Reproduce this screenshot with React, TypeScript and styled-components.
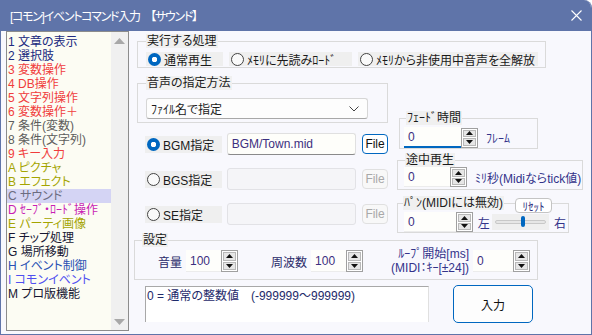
import styled, { createGlobalStyle } from 'styled-components';

const GlobalStyle = createGlobalStyle`
  html, body { margin: 0; padding: 0; background: #ffffff; }
  body {
    font-family: "Liberation Sans", "Noto Sans CJK JP", sans-serif;
    font-size: 12px;
    font-feature-settings: "palt";
    color: #1a1a1a;
  }
  * { box-sizing: border-box; }
`;

const commands: { text: string; color: string; selected?: boolean }[] = [
  { text: '1 文章の表示', color: '#202a80' },
  { text: '2 選択肢', color: '#202a80' },
  { text: '3 変数操作', color: '#f03c3c' },
  { text: '4 DB操作', color: '#f03c3c' },
  { text: '5 文字列操作', color: '#f03c3c' },
  { text: '6 変数操作＋', color: '#f03c3c' },
  { text: '7 条件(変数)', color: '#5c5c5c' },
  { text: '8 条件(文字列)', color: '#5c5c5c' },
  { text: '9 キー入力', color: '#f03c3c' },
  { text: 'A ピクチャ', color: '#a4a400' },
  { text: 'B エフェクト', color: '#a4a400' },
  { text: 'C サウンド', color: '#6c6c80', selected: true },
  { text: 'D ｾｰﾌﾞ・ﾛｰﾄﾞ操作', color: '#c81eb4' },
  { text: 'E パーティ画像', color: '#a4a400' },
  { text: 'F チップ処理', color: '#161632' },
  { text: 'G 場所移動', color: '#161632' },
  { text: 'H イベント制御', color: '#2850b4' },
  { text: 'I コモンイベント', color: '#5050f0' },
  { text: 'M プロ版機能', color: '#161632' },
];

const Triangle = ({ down }: { down?: boolean }) => (
  <svg width="7" height="4" viewBox="0 0 7 4">
    <path d={down ? 'M0 0H7L3.5 4Z' : 'M0 4H7L3.5 0Z'} fill="#111" />
  </svg>
);

const Spinner = ({ h }: { h: number }) => (
  <Spin $h={h}>
    <SpinHalf><Triangle /></SpinHalf>
    <SpinHalf><Triangle down /></SpinHalf>
  </Spin>
);

export default function App() {
  return (
    <>
      <GlobalStyle />
      <Window>
        <TitleBar>
          <Title>[コモン]イベントコマンド入力　【サウンド】</Title>
          <svg width="11" height="11" viewBox="0 0 11 11">
            <path d="M0.5 0.5L10.5 10.5M10.5 0.5L0.5 10.5" stroke="#fff" strokeWidth="1.1" />
          </svg>
        </TitleBar>
        <Body>
          <CommandList>
            <Items>
              {commands.map((c) => (
                <Item key={c.text} $color={c.color} $selected={c.selected}>{c.text}</Item>
              ))}
            </Items>
            <ScrollBar>
              <ScrollArrow>
                <svg width="11" height="6" viewBox="0 0 11 6"><path d="M0 6H11L5.5 0Z" fill="#a8a8a8" /></svg>
              </ScrollArrow>
              <ScrollArrow>
                <svg width="11" height="6" viewBox="0 0 11 6"><path d="M0 0H11L5.5 6Z" fill="#a8a8a8" /></svg>
              </ScrollArrow>
            </ScrollBar>
          </CommandList>

          <Main>
            <ExecGroup>
              <Legend>実行する処理</Legend>
              <RadioRow>
                <RadioPad $w={77}><RadioDot $checked />通常再生</RadioPad>
                <RadioPad $w={123}><RadioDot />ﾒﾓﾘに先読みﾛｰﾄﾞ</RadioPad>
                <RadioPad $w={180}><RadioDot />ﾒﾓﾘから非使用中音声を全解放</RadioPad>
              </RadioRow>
            </ExecGroup>

            <MiddleRow>
              <LeftCol>
                <SpecGroup>
                  <Legend>音声の指定方法</Legend>
                  <Select>
                    <span>ﾌｧｲﾙ名で指定</span>
                    <svg width="10" height="6" viewBox="0 0 10 6">
                      <path d="M0.5 0.5L5 5L9.5 0.5" stroke="#444" fill="none" strokeWidth="1" />
                    </svg>
                  </Select>
                </SpecGroup>
                <FileRows>
                  <FileRow>
                    <RadioPad $w={77}><RadioDot $checked />BGM指定</RadioPad>
                    <PathBox>BGM/Town.mid</PathBox>
                    <FileButton>File</FileButton>
                  </FileRow>
                  <FileRow>
                    <RadioPad $w={77}><RadioDot />BGS指定</RadioPad>
                    <PathBox $disabled />
                    <FileButton $disabled>File</FileButton>
                  </FileRow>
                  <FileRow>
                    <RadioPad $w={77}><RadioDot />SE指定</RadioPad>
                    <PathBox $disabled />
                    <FileButton $disabled>File</FileButton>
                  </FileRow>
                </FileRows>
              </LeftCol>

              <RightCol>
                <FadeGroup>
                  <Legend>ﾌｪｰﾄﾞ時間</Legend>
                  <SpinRow>
                    <NumInput $w={57} $h={21} $focused>0</NumInput>
                    <Spinner h={20} />
                    <Unit>ﾌﾚｰﾑ</Unit>
                  </SpinRow>
                </FadeGroup>
                <SeekGroup>
                  <Legend>途中再生</Legend>
                  <SpinRow>
                    <NumInput $w={46} $h={20}>0</NumInput>
                    <Spinner h={20} />
                    <Unit>ﾐﾘ秒(Midiならtick値)</Unit>
                  </SpinRow>
                </SeekGroup>
                <PanWrap>
                  <PanGroup>
                    <Legend>ﾊﾟﾝ(MIDIには無効)</Legend>
                    <SpinRow>
                      <NumInput $w={55} $h={20}>0</NumInput>
                      <Spinner h={20} />
                      <Side>左</Side>
                      <Slider>
                        <Track />
                        <Thumb />
                      </Slider>
                      <Side>右</Side>
                    </SpinRow>
                  </PanGroup>
                  <ResetButton>ﾘｾｯﾄ</ResetButton>
                </PanWrap>
              </RightCol>
            </MiddleRow>

            <SettingsGroup>
              <Legend>設定</Legend>
              <SettingsRow>
                <FieldLabel>音量</FieldLabel>
                <NumInput $w={35} $h={22}>100</NumInput>
                <Spinner h={22} />
                <FieldLabel $gap={33}>周波数</FieldLabel>
                <NumInput $w={35} $h={22}>100</NumInput>
                <Spinner h={22} />
                <LoopLabel>
                  <span>ﾙｰﾌﾟ開始[ms]</span>
                  <span>(MIDI：ｷｰ[±24])</span>
                </LoopLabel>
                <NumInput $w={40} $h={22}>0</NumInput>
                <Spinner h={22} />
              </SettingsRow>
            </SettingsGroup>

            <BottomRow>
              <InfoBox>0 = 通常の整数値　(-999999～999999)</InfoBox>
              <OkButton>入力</OkButton>
            </BottomRow>
          </Main>
        </Body>
      </Window>
    </>
  );
}

const Window = styled.div`
  width: 592px;
  height: 335px;
  display: flex;
  flex-direction: column;
  background: #f8f8fd;
  border: 1px solid #5f74a9;
  border-top: none;
  border-top-right-radius: 8px;
  overflow: hidden;
`;

const TitleBar = styled.div`
  height: 31px;
  flex-shrink: 0;
  display: flex;
  align-items: center;
  justify-content: space-between;
  padding: 0 9px 1px 9px;
  background: #5f74a9;
  color: #ffffff;
  font-size: 12px;
`;

const Title = styled.span`
  letter-spacing: -1.3px;
`;

const Body = styled.div`
  flex: 1;
  display: flex;
  align-items: flex-start;
  padding-left: 5px;
`;

const CommandList = styled.div`
  width: 123px;
  height: 300px;
  display: flex;
  border: 1px solid #8c8c8c;
  background: #fcfcf3;
`;

const Items = styled.div`
  flex: 1;
  padding: 3px 0 0 0;
`;

const Item = styled.div<{ $color: string; $selected?: boolean }>`
  height: 14px;
  line-height: 14px;
  padding-left: 1px;
  white-space: nowrap;
  color: ${(p) => p.$color};
  background: ${(p) => (p.$selected ? '#d4d4f4' : 'transparent')};
`;

const ScrollBar = styled.div`
  width: 17px;
  display: flex;
  flex-direction: column;
  justify-content: space-between;
  background: #f0f0f0;
  padding: 6px 0 5px;
`;

const ScrollArrow = styled.div`
  display: flex;
  justify-content: center;
`;

const Main = styled.div`
  flex: 1;
  padding-left: 8px;
`;

const GroupBase = styled.fieldset`
  margin: 0;
  min-width: 0;
  border: 1px solid #dadada;
`;

const Legend = styled.legend`
  padding: 0 1px;
  line-height: 14px;
  background: #f0f0f0;
  color: #1a1a1a;
`;

const ExecGroup = styled(GroupBase)`
  margin-top: 3px;
  width: 409px;
  padding: 0 0 1px 8px;
`;

const RadioRow = styled.div`
  display: flex;
  gap: 6px;
  margin-top: 4px;
`;

const RadioPad = styled.label<{ $w: number }>`
  width: ${(p) => p.$w}px;
  height: 17px;
  display: flex;
  align-items: center;
  gap: 3px;
  background: #efefef;
  white-space: nowrap;
  color: #1a1a1a;
  ${RadioRow} & { height: 14px; }
`;

const RadioDot = styled.span<{ $checked?: boolean }>`
  width: 13px;
  height: 13px;
  flex-shrink: 0;
  margin-left: 2px;
  border-radius: 50%;
  border: ${(p) => (p.$checked ? 'none' : '1px solid #444')};
  background: ${(p) =>
    p.$checked ? 'radial-gradient(circle, #ffffff 0 2.5px, #0067c0 3px)' : '#fafafa'};
`;

const MiddleRow = styled.div`
  display: flex;
  align-items: flex-start;
`;

const LeftCol = styled.div`
  width: 251px;
  display: flex;
  flex-direction: column;
`;

const SpecGroup = styled(GroupBase)`
  margin-top: 8px;
  padding: 0 0 3px 8px;
`;

const Select = styled.div`
  width: 222px;
  height: 21px;
  margin-top: 8px;
  display: flex;
  align-items: center;
  justify-content: space-between;
  padding: 0 8px 0 4px;
  background: #fdfdfd;
  border: 1px solid #d6d6d6;
  border-bottom-color: #a8a8a8;
  border-radius: 3px;
`;

const FileRows = styled.div`
  margin-top: 10px;
  display: flex;
  flex-direction: column;
  gap: 13px;
`;

const FileRow = styled.div`
  display: flex;
  align-items: center;
  padding-left: 8px;
`;

const PathBox = styled.div<{ $disabled?: boolean }>`
  width: 130px;
  height: 22px;
  margin-left: 5px;
  padding-left: 4px;
  line-height: 20px;
  color: #3c2f80;
  background: ${(p) => (p.$disabled ? '#f5f5f8' : '#fefefa')};
  border: 1px solid ${(p) => (p.$disabled ? '#e2e2e6' : '#e0e0e0')};
  border-bottom-color: ${(p) => (p.$disabled ? '#e2e2e6' : '#8a8a8a')};
  border-radius: 3px;
`;

const FileButton = styled.div<{ $disabled?: boolean }>`
  width: 26px;
  height: 20px;
  margin-left: 6px;
  display: flex;
  align-items: center;
  justify-content: center;
  border-radius: 4px;
  border: 1px solid ${(p) => (p.$disabled ? '#e0e0e0' : '#0067c0')};
  background: ${(p) => (p.$disabled ? '#f8f8f8' : '#ffffff')};
  color: ${(p) => (p.$disabled ? '#a8a8a8' : '#111111')};
`;

const RightCol = styled.div`
  margin-left: 9px;
  display: flex;
  flex-direction: column;
`;

const FadeGroup = styled(GroupBase)`
  margin: 43px 0 0 2px;
  width: 139px;
  padding: 0 0 0 4px;
  ${Legend} { margin-left: 2px; }
`;

const SeekGroup = styled(GroupBase)`
  margin-top: 4px;
  width: 186px;
  padding: 0 0 2px 6px;
  ${Legend} { margin-left: 1px; }
`;

const PanWrap = styled.div`
  position: relative;
  margin-top: 6px;
  width: 172px;
`;

const PanGroup = styled(GroupBase)`
  padding: 0 0 0 6px;
  ${Legend} { margin-left: -1px; }
`;

const SpinRow = styled.div`
  display: flex;
  align-items: center;
  margin-top: 2px;
  ${SeekGroup} & { margin-top: 0; }
`;

const NumInput = styled.div<{ $w: number; $h: number; $focused?: boolean }>`
  width: ${(p) => p.$w}px;
  height: ${(p) => p.$h}px;
  padding-left: 4px;
  display: flex;
  align-items: center;
  color: #3c2f80;
  background: #fefefb;
  border-bottom: ${(p) => (p.$focused ? '2px solid #0067c0' : '1px solid #ececec')};
`;

const Spin = styled.div<{ $h: number }>`
  width: 17px;
  height: ${(p) => p.$h}px;
  display: flex;
  flex-direction: column;
  gap: 1px;
  padding: 1px;
  background: #ffffff;
  border: 1px solid #a0a0a0;
`;

const SpinHalf = styled.div`
  flex: 1;
  display: flex;
  align-items: center;
  justify-content: center;
  background: #e6e6e6;
  border: 1px solid #b8b8b8;
`;

const Unit = styled.span`
  margin-left: 8px;
  color: #33338a;
  white-space: nowrap;
`;

const Side = styled.span`
  margin: 0 2px 0 5px;
  color: #33338a;
  & + & { margin: 0; }
`;

const Slider = styled.div`
  position: relative;
  width: 60px;
  height: 16px;
  display: flex;
  align-items: center;
  padding: 0 3px;
  background: #efefef;
`;

const Track = styled.div`
  flex: 1;
  height: 4px;
  background: #e6e6e6;
  border: 1px solid #c8c8c8;
  border-radius: 2px;
`;

const Thumb = styled.div`
  position: absolute;
  left: 29px;
  top: 2px;
  width: 4px;
  height: 11px;
  border-radius: 2px;
  background: #0067c0;
`;

const ResetButton = styled.div`
  position: absolute;
  top: 2px;
  right: 17px;
  width: 37px;
  height: 15px;
  display: flex;
  align-items: center;
  justify-content: center;
  font-size: 11px;
  color: #2a2a7a;
  background: #ffffff;
  border: 1px solid #c4c4c4;
  border-radius: 4px;
`;

const SettingsGroup = styled(GroupBase)`
  margin-left: -3px;
  width: 404px;
  padding: 0 7px 4px 0;
  ${Legend} { margin-left: 7px; }
`;

const SettingsRow = styled.div`
  height: 28px;
  display: flex;
  align-items: center;
  padding-left: 23px;
`;

const FieldLabel = styled.span<{ $gap?: number }>`
  margin: 0 4px 0 ${(p) => p.$gap ?? 0}px;
  color: #2a2a6a;
`;

const LoopLabel = styled.div`
  margin: 0 4px 0 auto;
  display: flex;
  flex-direction: column;
  align-items: flex-end;
  line-height: 14px;
  color: #33338a;
`;

const BottomRow = styled.div`
  display: flex;
  align-items: flex-start;
  margin-top: 6px;
`;

const InfoBox = styled.div`
  width: 284px;
  height: 36px;
  margin-left: 8px;
  padding: 1px 1px;
  line-height: 16px;
  color: #1e2a6a;
  background: #ffffff;
  border-top: 1px solid #a8a8a8;
  border-left: 1px solid #a8a8a8;
  border-right: 1px solid #e0e0e0;
  white-space: pre;
`;

const OkButton = styled.div`
  width: 80px;
  height: 38px;
  margin: -1px 0 0 24px;
  display: flex;
  align-items: center;
  justify-content: center;
  color: #111111;
  background: #fdfdfd;
  border: 1px solid #0067c0;
  border-radius: 5px;
`;
